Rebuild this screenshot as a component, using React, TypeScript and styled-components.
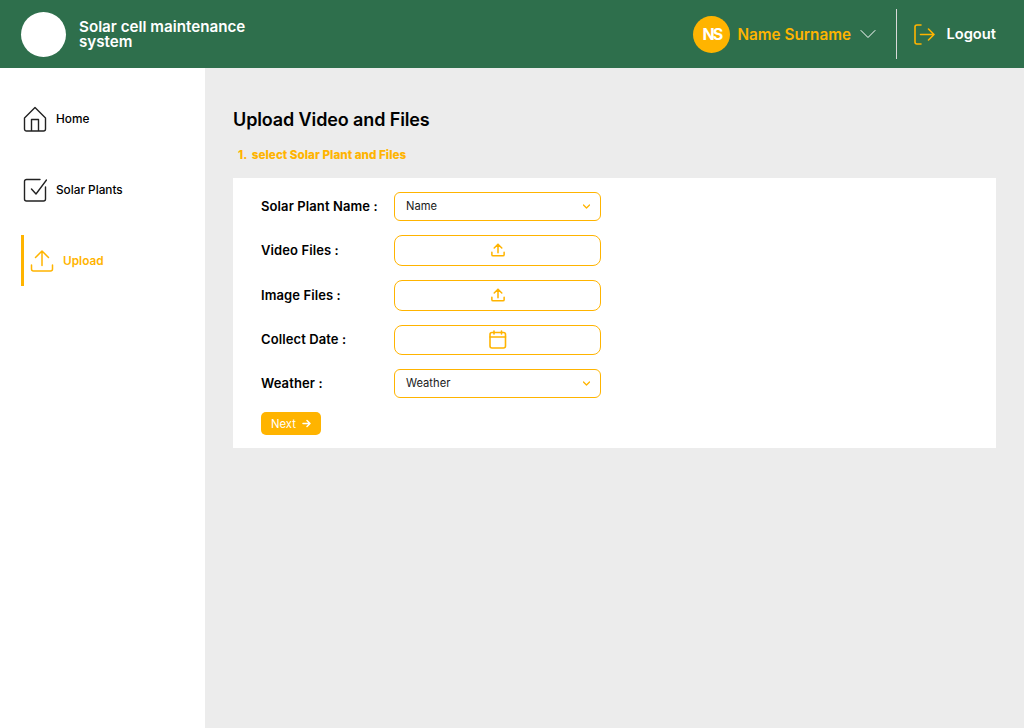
import React from "react";
import styled, { createGlobalStyle } from "styled-components";

const YELLOW = "#ffb400";
const FONT = `Inter, "Liberation Sans", sans-serif`;

const GlobalStyle = createGlobalStyle`
    html, body {
        margin: 0;
        padding: 0;
        background: #ececec;
        font-family: ${FONT};
    }
    * {
        box-sizing: border-box;
    }
`;

const Page = styled.div`
    width: 1024px;
    height: 728px;
    display: flex;
    flex-direction: column;
    overflow: hidden;
`;

const Header = styled.header`
    height: 68px;
    background: #2e6f4c;
    display: flex;
    align-items: center;
    padding-left: 21px;
`;

const LogoCircle = styled.div`
    width: 45px;
    height: 45px;
    border-radius: 50%;
    background: #fff;
    margin-right: 13px;
`;

const AppTitle = styled.h1`
    margin: 0;
    color: #fff;
    font-size: 15.2px;
    line-height: 15px;
    font-weight: 600;
    flex: 1;
`;

const Avatar = styled.div`
    width: 37px;
    height: 37px;
    border-radius: 50%;
    background: ${YELLOW};
    color: #fff;
    font-size: 16px;
    font-weight: 700;
    letter-spacing: -2px;
    display: flex;
    align-items: center;
    justify-content: center;
    margin-right: 7px;
`;

const UserName = styled.span`
    color: ${YELLOW};
    font-size: 15.3px;
    font-weight: 600;
    width: 123px;
    white-space: nowrap;
`;

const Divider = styled.div`
    width: 1px;
    height: 50px;
    background: #d9d9d9;
    margin: 0 17px 0 20px;
`;

const LogoutText = styled.span`
    color: #fff;
    font-size: 14.7px;
    font-weight: 600;
    margin: 0 28px 0 11px;
`;

const Body = styled.div`
    flex: 1;
    display: flex;
`;

const Sidebar = styled.nav`
    width: 205px;
    background: #fff;
    padding-top: 25px;
    display: flex;
    flex-direction: column;
    gap: 20px;
`;

const NavItem = styled.a<{ $active?: boolean }>`
    height: 51px;
    display: flex;
    align-items: center;
    margin-left: 21px;
    gap: 9px;
    padding-left: ${(props) => (props.$active ? "6px" : "2px")};
    border-left: ${(props) =>
        props.$active ? `3px solid ${YELLOW}` : "0 solid transparent"};
    color: ${(props) => (props.$active ? YELLOW : "#000")};
    font-size: 11.8px;
    font-weight: ${(props) => (props.$active ? 600 : 500)};
`;

const Main = styled.main`
    flex: 1;
    padding: 40px 28px 0 28px;
`;

const Title = styled.h2`
    margin: 0;
    font-size: 18px;
    line-height: 24px;
    font-weight: 600;
    letter-spacing: -0.12px;
    color: #000;
`;

const StepTitle = styled.p`
    margin: 16px 0 16px 5px;
    font-size: 11.7px;
    line-height: 14px;
    font-weight: 800;
    color: ${YELLOW};
`;

const StepNumber = styled.span`
    margin-right: 2px;
`;

const Card = styled.section`
    background: #fff;
    padding: 14px 0 13px 28px;
    display: flex;
    flex-direction: column;
    gap: 14px;
    align-items: flex-start;
`;

const Row = styled.div`
    display: flex;
    align-items: center;
`;

const Label = styled.label`
    width: 133px;
    padding-bottom: 2px;
    font-size: 13px;
    letter-spacing: 0.1px;
    font-weight: 600;
    color: #000;
    white-space: nowrap;
`;

const Field = styled.div<{ $select?: boolean; $short?: boolean }>`
    width: 207px;
    height: ${(props) => (props.$select ? "29px" : props.$short ? "30px" : "31px")};
    border: 1px solid ${YELLOW};
    border-radius: ${(props) => (props.$select ? "6px" : "8px")};
    display: flex;
    align-items: center;
    justify-content: ${(props) => (props.$select ? "space-between" : "center")};
    padding: ${(props) => (props.$select ? "0 10px 1px 11px" : "0 0 1px 0")};
    font-size: 11.2px;
    color: #1a1a1a;
`;

const NextButton = styled.button`
    width: 60px;
    height: 23px;
    border: none;
    border-radius: 5px;
    background: ${YELLOW};
    color: #fff;
    font-family: inherit;
    font-size: 11.3px;
    display: flex;
    align-items: center;
    justify-content: center;
    gap: 6px;
    padding: 0;
`;

function HomeIcon() {
    return (
        <svg width="24" height="26" viewBox="0 0 24 26" fill="none" stroke="#222" strokeWidth="1.4" strokeLinejoin="round">
            <path d="M1.500 12 12 1.500 22.500 12v11a2 2 0 0 1-2 2h-17a2 2 0 0 1-2-2z" />
            <path d="M8.500 25V13.500h7V25" />
        </svg>
    );
}

function CheckIcon() {
    return (
        <svg width="24" height="24" viewBox="0 0 24 24" fill="none" stroke="#222" strokeWidth="1.4" strokeLinecap="round" strokeLinejoin="round">
            <path d="M17 1.500H3.500a2 2 0 0 0-2 2V21a2 2 0 0 0 2 2h17a2 2 0 0 0 2-2V9" />
            <path d="M8.500 11l4.500 5L23.500 2" />
        </svg>
    );
}

function UploadIcon({ size, stroke }: { size: number; stroke: number }) {
    return (
        <svg width={size} height={size} viewBox="0 0 24 24" fill="none" stroke={YELLOW} strokeWidth={stroke} strokeLinecap="round" strokeLinejoin="round">
            <path d="M1.500 16v4a2 2 0 0 0 2 2h17a2 2 0 0 0 2-2v-4" />
            <path d="M12 16.500V2M5.500 8.500 12 2l6.500 6.500" />
        </svg>
    );
}

function CalendarIcon() {
    return (
        <svg width="18" height="19" viewBox="0 0 18 19" fill="none" stroke={YELLOW} strokeWidth="1.6" strokeLinecap="round">
            <rect x="1" y="2.500" width="15.500" height="15.500" rx="2" />
            <path d="M1 7h15.500M5 1v3M12.500 1v3" />
        </svg>
    );
}

function Chevron({ size, color, stroke }: { size: number; color: string; stroke: number }) {
    return (
        <svg width={size} height={size} viewBox="0 0 16 16" fill="none" stroke={color} strokeWidth={stroke} strokeLinecap="round" strokeLinejoin="round">
            <path d="M1 4.500 8 11.500 15 4.500" />
        </svg>
    );
}

function LogoutIcon() {
    return (
        <svg width="21" height="21" viewBox="0 0 21 21" fill="none" stroke={YELLOW} strokeWidth="1.6" strokeLinecap="round" strokeLinejoin="round">
            <path d="M7 1H3a2 2 0 0 0-2 2v15a2 2 0 0 0 2 2h4" />
            <path d="M6.500 10.500H20M14.500 5l5.500 5.500-5.500 5.500" />
        </svg>
    );
}

function ArrowIcon() {
    return (
        <svg width="9" height="9" viewBox="0 0 9 9" fill="none" stroke="#fff" strokeWidth="1.5" strokeLinecap="round" strokeLinejoin="round">
            <path d="M1 4.500h7M5 1.500l3 3-3 3" />
        </svg>
    );
}

export default function App() {
    return (
        <Page>
            <GlobalStyle />
            <Header>
                <LogoCircle />
                <AppTitle>
                    Solar cell maintenance
                    <br />
                    system
                </AppTitle>
                <Avatar>NS</Avatar>
                <UserName>Name Surname</UserName>
                <Chevron size={16} color="#fff" stroke={1} />
                <Divider />
                <LogoutIcon />
                <LogoutText>Logout</LogoutText>
            </Header>
            <Body>
                <Sidebar>
                    <NavItem>
                        <HomeIcon />
                        Home
                    </NavItem>
                    <NavItem>
                        <CheckIcon />
                        Solar Plants
                    </NavItem>
                    <NavItem $active>
                        <UploadIcon size={24} stroke={1.5} />
                        Upload
                    </NavItem>
                </Sidebar>
                <Main>
                    <Title>Upload Video and Files</Title>
                    <StepTitle>
                        <StepNumber>1.</StepNumber> select Solar Plant and Files
                    </StepTitle>
                    <Card>
                        <Row>
                            <Label>Solar Plant Name :</Label>
                            <Field $select>
                                Name
                                <Chevron size={7} color={YELLOW} stroke={3} />
                            </Field>
                        </Row>
                        <Row>
                            <Label>Video Files :</Label>
                            <Field>
                                <UploadIcon size={14} stroke={2.6} />
                            </Field>
                        </Row>
                        <Row>
                            <Label>Image Files :</Label>
                            <Field>
                                <UploadIcon size={14} stroke={2.6} />
                            </Field>
                        </Row>
                        <Row>
                            <Label>Collect Date :</Label>
                            <Field $short>
                                <CalendarIcon />
                            </Field>
                        </Row>
                        <Row>
                            <Label>Weather :</Label>
                            <Field $select>
                                Weather
                                <Chevron size={7} color={YELLOW} stroke={3} />
                            </Field>
                        </Row>
                        <NextButton>
                            Next
                            <ArrowIcon />
                        </NextButton>
                    </Card>
                </Main>
            </Body>
        </Page>
    );
}
